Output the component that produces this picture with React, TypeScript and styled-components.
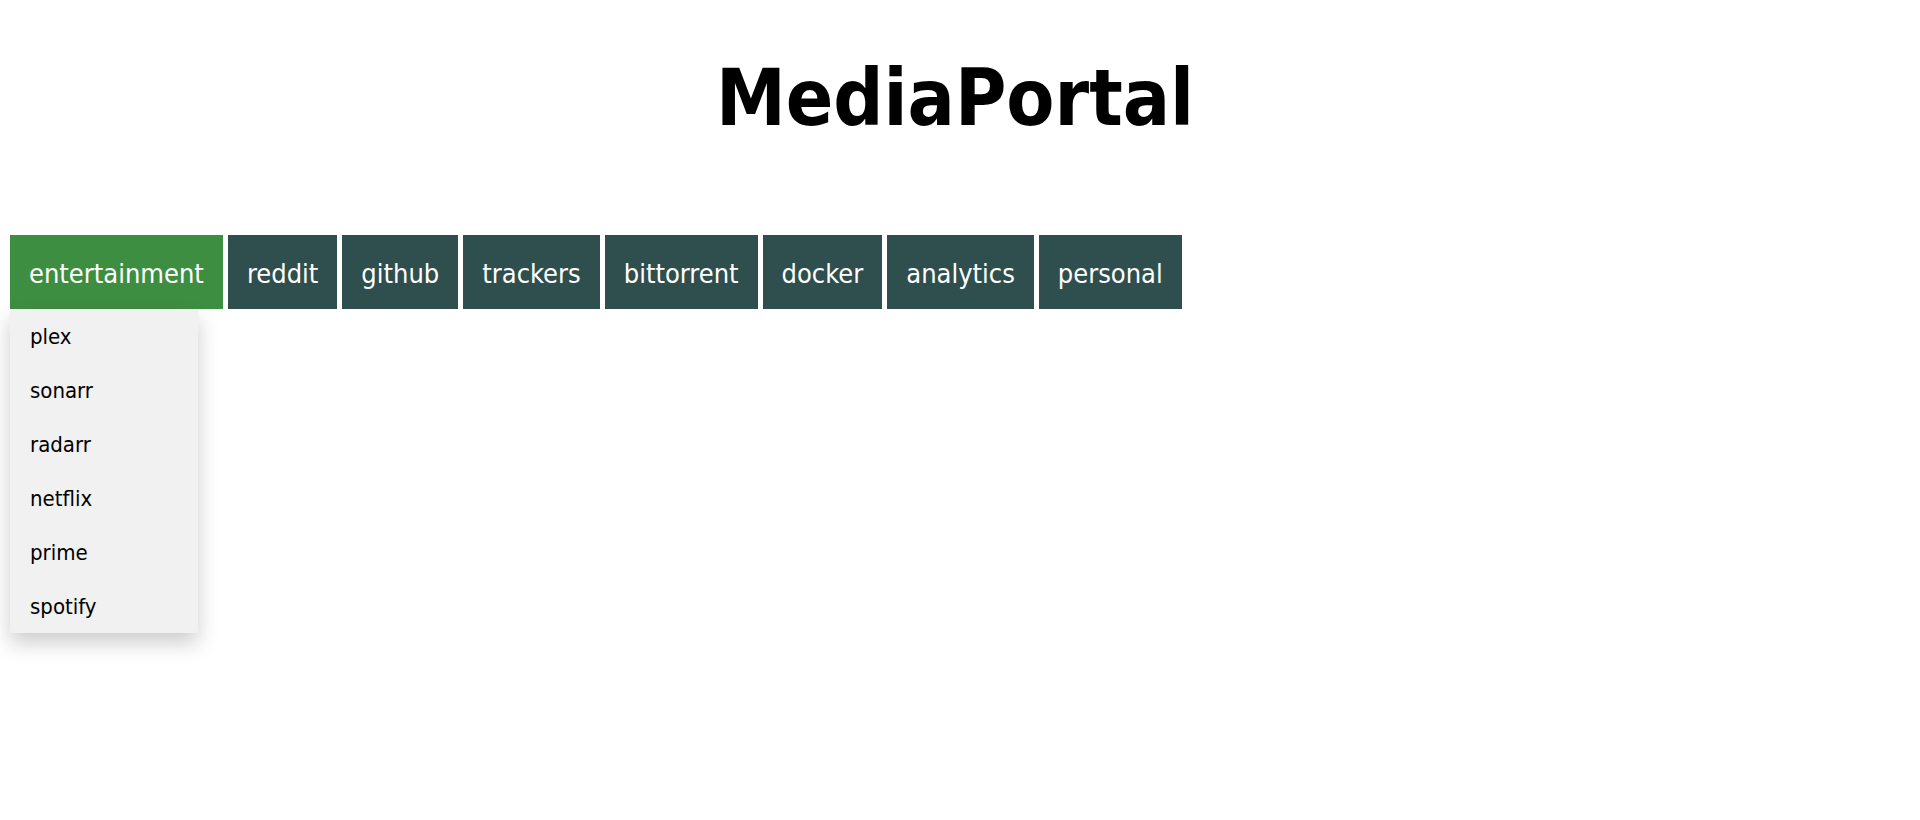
import React, { FC } from "react";
import styled, { createGlobalStyle } from "styled-components";

const GlobalStyle = createGlobalStyle`
  html, body {
    margin: 0;
    background: #ffffff;
  }
  body {
    font-family: "DejaVu Sans Condensed", "DejaVu Sans", sans-serif;
  }
`;

const Page = styled.div`
  height: 100vh;
  padding: 53px 10px 0;
  box-sizing: border-box;
  overflow: hidden;
`;

const Title = styled.h1`
  margin: 0 0 92px;
  padding-right: 10px;
  font-size: 78px;
  line-height: 90px;
  font-weight: bold;
  text-align: center;
  color: #000;
`;

const Nav = styled.nav`
  display: flex;
  gap: 5px;
  align-items: flex-start;
`;

const Menu = styled.div`
  position: relative;
`;

const NavButton = styled.div<{ $active?: boolean }>`
  padding: 22px 19px 18.5px;
  font-size: 27px;
  line-height: 33px;
  color: #ffffff;
  background: ${p => (p.$active ? "#3e8e41" : "#2f4f4f")};
  white-space: nowrap;
  cursor: pointer;
`;

const Dropdown = styled.div`
  position: absolute;
  top: 100%;
  left: 0;
  width: 188px;
  background: #f1f1f1;
  box-shadow: 0 10px 20px 0 rgba(0, 0, 0, 0.2);
  z-index: 1;
`;

const DropdownItem = styled.div`
  padding: 16.5px 20px 13.5px;
  font-size: 22px;
  line-height: 24px;
  color: #000;
`;

type MenuEntry = { name: string; items: string[] };

const menus: MenuEntry[] = [
  { name: "entertainment", items: ["plex", "sonarr", "radarr", "netflix", "prime", "spotify"] },
  { name: "reddit", items: [] },
  { name: "github", items: [] },
  { name: "trackers", items: [] },
  { name: "bittorrent", items: [] },
  { name: "docker", items: [] },
  { name: "analytics", items: [] },
  { name: "personal", items: [] }
];

const App: FC = () => {
  const open = "entertainment";

  return (
    <Page>
      <GlobalStyle />
      <Title>MediaPortal</Title>
      <Nav>
        {menus.map(menu => {
          const isOpen = menu.name === open;
          return (
            <Menu key={menu.name}>
              <NavButton $active={isOpen}>{menu.name}</NavButton>
              {isOpen && (
                <Dropdown>
                  {menu.items.map(item => (
                    <DropdownItem key={item}>{item}</DropdownItem>
                  ))}
                </Dropdown>
              )}
            </Menu>
          );
        })}
      </Nav>
    </Page>
  );
};

export default App;
